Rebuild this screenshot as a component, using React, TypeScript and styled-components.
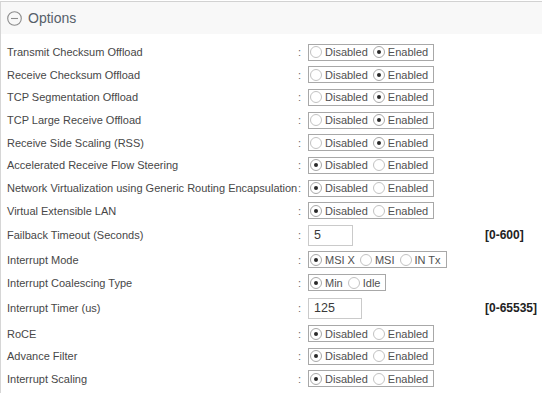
import styled, { createGlobalStyle } from "styled-components"

//#region ----- DATA -----
type Field =
  | { kind: "radio"; label: string; options: string[]; selected: number }
  | { kind: "text"; label: string; value: string; width: number; range: string; height: number }

const fields: Field[] = [
  { kind: "radio", label: "Transmit Checksum Offload", options: ["Disabled", "Enabled"], selected: 1 },
  { kind: "radio", label: "Receive Checksum Offload", options: ["Disabled", "Enabled"], selected: 1 },
  { kind: "radio", label: "TCP Segmentation Offload", options: ["Disabled", "Enabled"], selected: 1 },
  { kind: "radio", label: "TCP Large Receive Offload", options: ["Disabled", "Enabled"], selected: 1 },
  { kind: "radio", label: "Receive Side Scaling (RSS)", options: ["Disabled", "Enabled"], selected: 1 },
  { kind: "radio", label: "Accelerated Receive Flow Steering", options: ["Disabled", "Enabled"], selected: 0 },
  {
    kind: "radio",
    label: "Network Virtualization using Generic Routing Encapsulation",
    options: ["Disabled", "Enabled"],
    selected: 0,
  },
  { kind: "radio", label: "Virtual Extensible LAN", options: ["Disabled", "Enabled"], selected: 0 },
  { kind: "text", label: "Failback Timeout (Seconds)", value: "5", width: 45, range: "[0-600]", height: 26.3 },
  { kind: "radio", label: "Interrupt Mode", options: ["MSI X", "MSI", "IN Tx"], selected: 0 },
  { kind: "radio", label: "Interrupt Coalescing Type", options: ["Min", "Idle"], selected: 0 },
  { kind: "text", label: "Interrupt Timer (us)", value: "125", width: 54, range: "[0-65535]", height: 28.3 },
  { kind: "radio", label: "RoCE", options: ["Disabled", "Enabled"], selected: 0 },
  { kind: "radio", label: "Advance Filter", options: ["Disabled", "Enabled"], selected: 0 },
  { kind: "radio", label: "Interrupt Scaling", options: ["Disabled", "Enabled"], selected: 0 },
]
//#endregion

const CollapseIcon = () => (
  <svg width="15" height="15" viewBox="0 0 15 15">
    <circle cx="7.5" cy="7.5" r="6.8" fill="none" stroke="#8c8c8c" strokeWidth="1.1" />
    <line x1="4" y1="7.5" x2="11" y2="7.5" stroke="#8c8c8c" strokeWidth="1.1" />
  </svg>
)

export default function App() {
  //#region ----- RENDER -----
  return (
    <>
      <GlobalStyle />
      <Root>
        <Panel>
          <Header>
            <CollapseIcon />
            <HeaderTitle>Options</HeaderTitle>
          </Header>

          <FieldList>
            {fields.map((field, i) => (
              <Row key={field.label} $h={field.kind === "text" ? field.height : 22.7}>
                <Label>{field.label}</Label>
                <Colon>:</Colon>
                <Control>
                  {field.kind === "radio" ? (
                    <RadioGroup>
                      {field.options.map((opt, j) => (
                        <RadioOption key={opt}>
                          <Radio
                            type="radio"
                            name={`field-${i}`}
                            defaultChecked={j === field.selected}
                          />
                          <span>{opt}</span>
                        </RadioOption>
                      ))}
                    </RadioGroup>
                  ) : (
                    <TextBox defaultValue={field.value} $w={field.width} />
                  )}
                </Control>
                <Range>{field.kind === "text" ? field.range : ""}</Range>
              </Row>
            ))}
          </FieldList>
        </Panel>
      </Root>
    </>
  )
  //#endregion
}

//#region ----- STYLED COMPONENTS -----
const GlobalStyle = createGlobalStyle`
  html, body {
    margin: 0;
    padding: 0;
    background: #ffffff;
    font-family: "Liberation Sans", Arial, sans-serif;
  }
`

const Root = styled.div`
  padding-top: 1px;
  width: 543px;
  height: 392px;
  overflow: hidden;
`

const Panel = styled.div`
  border-top: 1px solid #d2d2d2;
  border-left: 1px solid #d6d6d6;
  height: 100%;
  width: 541px;
`

const Header = styled.div`
  height: 32px;
  display: flex;
  align-items: center;
  gap: 6px;
  padding-left: 6px;
  background: #f8f8f8;
`

const HeaderTitle = styled.span`
  font-size: 14px;
  color: #56606a;
`

const FieldList = styled.div`
  padding-top: 6.7px;
`

const Row = styled.div<{ $h: number }>`
  display: grid;
  grid-template-columns: 297px 10px 177px auto;
  align-items: center;
  height: ${({ $h }) => $h}px;
  font-size: 11px;
  color: #474747;
`

const Label = styled.div`
  padding-left: 6px;
  white-space: nowrap;
`

const Colon = styled.div`
  color: #6a6a6a;
`

const Control = styled.div`
  display: flex;
  align-items: center;
`

const RadioGroup = styled.div`
  display: inline-flex;
  align-items: center;
  gap: 5px;
  height: 17px;
  box-sizing: border-box;
  border: 1px solid #a8a8a8;
  padding: 0 5px 0 1px;
`

const RadioOption = styled.label`
  display: inline-flex;
  align-items: center;
  gap: 3px;
  white-space: nowrap;
  color: #505050;
`

const Radio = styled.input`
  appearance: none;
  margin: 0;
  width: 12px;
  height: 12px;
  box-sizing: border-box;
  border: 1px solid #c2c2c2;
  border-radius: 50%;
  background: #ffffff;
  display: grid;
  place-items: center;

  &:checked {
    border-color: #a8a8a8;
  }

  &:checked::after {
    content: "";
    width: 4px;
    height: 4px;
    border-radius: 50%;
    background: #2a2a2a;
  }
`

const TextBox = styled.input<{ $w: number }>`
  width: ${({ $w }) => $w}px;
  height: 21px;
  box-sizing: border-box;
  border: 1px solid #cacaca;
  padding: 0 0 0 5px;
  margin: 0;
  font-family: "Liberation Sans", Arial, sans-serif;
  font-size: 12.5px;
  color: #3a3a3a;
  outline: none;
`

const Range = styled.div`
  font-weight: 700;
  font-size: 12px;
  color: #222222;
  white-space: nowrap;
`
//#endregion
